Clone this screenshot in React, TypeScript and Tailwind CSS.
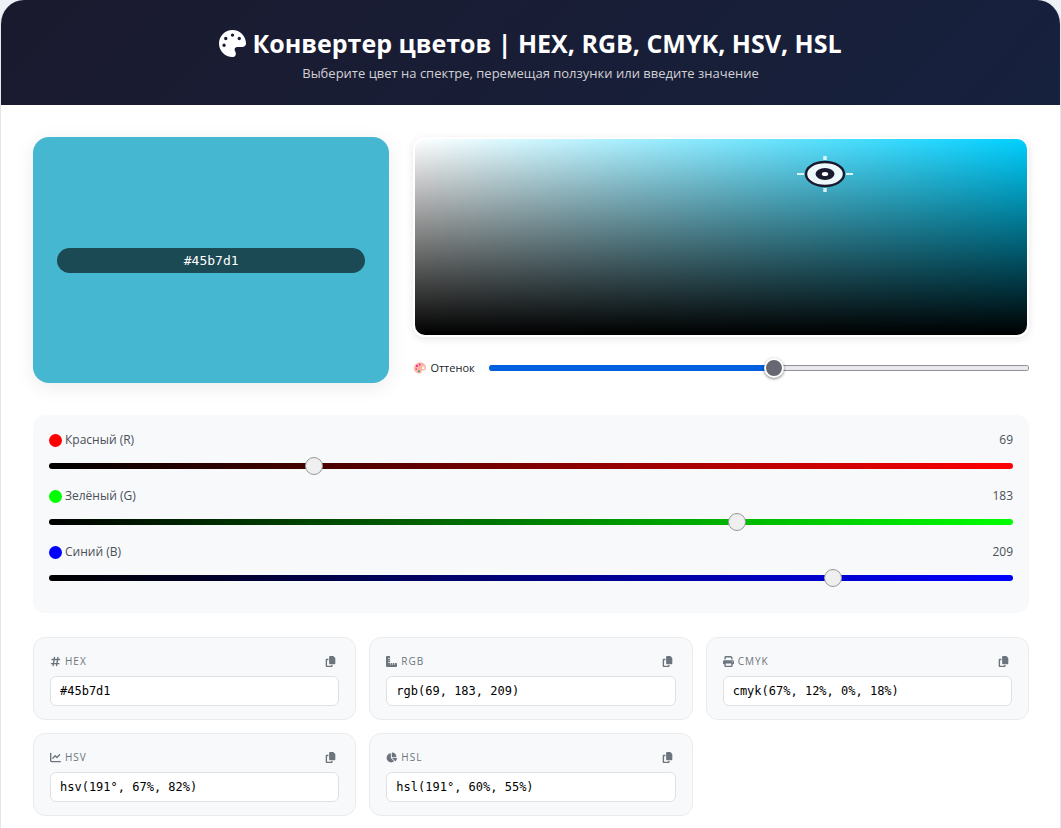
import { useId, useState } from "react";
import type { PointerEvent, ReactNode } from "react";
import {
  FaChartLine,
  FaChartPie,
  FaCopy,
  FaHashtag,
  FaPalette,
  FaPrint,
  FaRulerCombined,
} from "react-icons/fa6";

type Rgb = { r: number; g: number; b: number };

function getHue({ r, g, b }: Rgb) {
  const max = Math.max(r, g, b);
  const d = max - Math.min(r, g, b);
  if (d === 0) return 0;
  let h = (r - g) / d + 4;
  if (max === r) h = ((g - b) / d + 6) % 6;
  else if (max === g) h = (b - r) / d + 2;
  return h * 60;
}

function hsvToRgb(h: number, s: number, v: number): Rgb {
  const f = (n: number) => {
    const k = (n + h / 60) % 6;
    return Math.round(255 * (v - v * s * Math.max(0, Math.min(k, 4 - k, 1))));
  };
  return { r: f(5), g: f(3), b: f(1) };
}

const pct = (n: number) => `${Math.round(n * 100)}%`;

function ChannelSlider({
  label,
  dot,
  track,
  value,
  onChange,
}: {
  label: string;
  dot: string;
  track: string;
  value: number;
  onChange: (value: number) => void;
}) {
  const id = useId();

  return (
    <div className="mb-3">
      <div className="mb-2 flex h-[18px] items-center justify-between text-xs text-[#495057]">
        <label htmlFor={id} className="flex items-center gap-[3px]">
          <span className={`size-[13px] rounded-full ${dot}`} />
          {label}
        </label>
        <span>{value}</span>
      </div>
      <div className="flex h-[18px] items-center">
        <input
          id={id}
          type="range"
          min={0}
          max={255}
          value={value}
          onChange={(e) => onChange(Number(e.target.value))}
          className={`h-1.5 w-full cursor-pointer appearance-none rounded-full bg-linear-to-r/srgb from-black ${track} [&::-webkit-slider-thumb]:size-[18px] [&::-webkit-slider-thumb]:appearance-none [&::-webkit-slider-thumb]:rounded-full [&::-webkit-slider-thumb]:border [&::-webkit-slider-thumb]:border-[#999999] [&::-webkit-slider-thumb]:bg-[#efefef]`}
        />
      </div>
    </div>
  );
}

function FormatCard({ icon, name, value }: { icon: ReactNode; name: string; value: string }) {
  const id = useId();

  return (
    <div className="rounded-xl border border-[#e9ecef] bg-[#f8f9fb] px-4 pt-[14px] pb-[13px]">
      <div className="mb-[5px] flex h-[19px] items-center justify-between text-[#6c757d]">
        <label htmlFor={id} className="flex items-center gap-1 text-[10px] tracking-widest">
          <span className="text-[11px]">{icon}</span>
          {name}
        </label>
        <button
          type="button"
          aria-label={`Копировать ${name}`}
          onClick={() => navigator.clipboard?.writeText(value)}
          className="cursor-pointer px-[3px] text-[11px]"
        >
          <FaCopy />
        </button>
      </div>
      <input
        id={id}
        type="text"
        readOnly
        value={value}
        className="block h-[30px] w-full rounded-md border border-[#dee2e6] bg-white px-[9px] font-['DejaVu_Sans_Mono',monospace] text-xs text-black"
      />
    </div>
  );
}

function Crosshair() {
  return (
    <svg width="56" height="36" viewBox="0 0 56 36" fill="none">
      <path d="M0 18h7M49 18h7" stroke="#fff" strokeOpacity=".8" strokeWidth="2" />
      <path d="M28 0v4M28 32v4" stroke="#fff" strokeOpacity=".8" strokeWidth="3.5" />
      <ellipse cx="28" cy="18" rx="19" ry="12" fill="#fff" fillOpacity=".9" stroke="#1a1a2e" strokeWidth="2.4" />
      <ellipse cx="28" cy="18" rx="9.5" ry="6" fill="#1a1a2e" />
      <ellipse cx="28" cy="18" rx="3.2" ry="2" fill="#fff" />
    </svg>
  );
}

function PaletteEmoji() {
  return (
    <svg width="12" height="12" viewBox="0 0 24 24">
      <path
        d="M12 1C5 1 0 6 0 12.500S5 23 11 23c4 0 4-2 4-4 0-2 2-2 4-2 3 0 5-2 5-5C24 5 19 1 12 1Z"
        fill="#ffb3a2"
      />
      <ellipse cx="18.500" cy="11.500" rx="2.500" ry="3" fill="#fff" />
      <circle cx="11.500" cy="5" r="1.800" fill="#c239b3" />
      <circle cx="6" cy="8" r="1.800" fill="#e3008c" />
      <circle cx="4.500" cy="14" r="1.700" fill="#e0557f" />
      <circle cx="10" cy="18.500" r="2" fill="#2a93a8" />
    </svg>
  );
}

export default function App() {
  const [rgb, setRgb] = useState<Rgb>({ r: 69, g: 183, b: 209 });
  const { r, g, b } = rgb;

  const max = Math.max(r, g, b) / 255;
  const min = Math.min(r, g, b) / 255;
  const hue = Math.round(getHue(rgb));
  const sat = max === 0 ? 0 : (max - min) / max;
  const light = (max + min) / 2;
  const hslSat = max === min ? 0 : (max - min) / (1 - Math.abs(2 * light - 1));
  const ink = (n: number) => pct(max === 0 ? 0 : (max - n / 255) / max);

  const hex = "#" + [r, g, b].map((n) => n.toString(16).padStart(2, "0")).join("");
  const pure = hsvToRgb(hue, 1, 1);

  const pickColor = (e: PointerEvent<HTMLDivElement>) => {
    const box = e.currentTarget.getBoundingClientRect();
    const x = Math.min(1, Math.max(0, (e.clientX - box.left) / box.width));
    const y = Math.min(1, Math.max(0, (e.clientY - box.top) / box.height));
    setRgb(hsvToRgb(hue, x, 1 - y));
  };

  return (
    <div className="min-h-screen bg-[#eef1f6] font-['Open_Sans','Noto_Sans',sans-serif]">
      <div className="min-h-screen overflow-hidden rounded-t-3xl border-x border-[#e4e6ea] bg-white">
        <header className="bg-linear-135 from-[#1a1a2e] to-[#16213e] px-8 pt-6 pb-[21px] text-center">
          <h1 className="flex items-center justify-center gap-1.5 text-[25px] leading-[38px] font-bold text-white">
            <FaPalette className="size-[27px]" />
            Конвертер цветов | HEX, RGB, CMYK, HSV, HSL
          </h1>
          <p className="mt-px text-[13px] leading-[21px] text-[#d1d1d5]">
            Выберите цвет на спектре, перемещая ползунки или введите значение
          </p>
        </header>

        <main className="pt-8 pr-[31px] pb-3 pl-8">
          <section className="grid grid-cols-[11fr_19fr] gap-6">
            <div
              className="flex items-center rounded-2xl px-6 shadow-[0_4px_20px_rgba(0,0,0,0.08)]"
              style={{ backgroundColor: hex }}
            >
              <div className="w-full rounded-full bg-black/60 text-center font-['DejaVu_Sans_Mono',monospace] text-[13px] leading-[25px] text-white">
                {hex}
              </div>
            </div>

            <div>
              <div className="rounded-xl border-2 border-white shadow-[0_2px_8px_rgba(0,0,0,0.1)]">
                <div
                  onPointerDown={pickColor}
                  className="relative h-[196px] cursor-crosshair rounded-[10px]"
                  style={{
                    backgroundImage: `linear-gradient(to top, #000, transparent), linear-gradient(to right, #fff, rgb(${pure.r}, ${pure.g}, ${pure.b}))`,
                  }}
                >
                  <div
                    className="pointer-events-none absolute -translate-x-1/2 -translate-y-1/2"
                    style={{ left: `${sat * 100}%`, top: `${(1 - max) * 100}%` }}
                  >
                    <Crosshair />
                  </div>
                </div>
              </div>
              <div className="mt-4 flex h-[30px] items-center gap-[14px]">
                <label
                  htmlFor="hue"
                  className="flex items-center gap-1 pl-px text-[11px] text-[#212529]"
                >
                  <PaletteEmoji />
                  Оттенок
                </label>
                <input
                  id="hue"
                  type="range"
                  min={0}
                  max={360}
                  value={hue}
                  onChange={(e) => setRgb(hsvToRgb(Number(e.target.value), sat, max))}
                  className="h-1.5 min-w-0 flex-1 cursor-pointer appearance-none rounded-full border-r border-[#8f8f9d] [&::-webkit-slider-thumb]:size-5 [&::-webkit-slider-thumb]:appearance-none [&::-webkit-slider-thumb]:rounded-full [&::-webkit-slider-thumb]:border-2 [&::-webkit-slider-thumb]:border-white [&::-webkit-slider-thumb]:bg-[#676774] [&::-webkit-slider-thumb]:shadow-[0_1px_3px_rgba(0,0,0,0.5)]"
                  style={{
                    backgroundImage: `linear-gradient(to right, #0060df ${hue / 3.6}%, transparent ${hue / 3.6}%), linear-gradient(#8f8f9d 1px, #e9e9ed 1px 5px, #8f8f9d 5px)`,
                  }}
                />
              </div>
            </div>
          </section>

          <section className="mt-8 rounded-xl bg-[#f8f9fb] px-4 pt-4 pb-[14px]">
            <ChannelSlider
              label="Красный (R)"
              dot="bg-[#ff0000]"
              track="to-[#ff0000]"
              value={r}
              onChange={(value) => setRgb({ ...rgb, r: value })}
            />
            <ChannelSlider
              label="Зелёный (G)"
              dot="bg-[#00ff00]"
              track="to-[#00ff00]"
              value={g}
              onChange={(value) => setRgb({ ...rgb, g: value })}
            />
            <ChannelSlider
              label="Синий (B)"
              dot="bg-[#0000ff]"
              track="to-[#0000ff]"
              value={b}
              onChange={(value) => setRgb({ ...rgb, b: value })}
            />
          </section>

          <section className="mt-6 grid grid-cols-3 gap-[13px]">
            <FormatCard icon={<FaHashtag />} name="HEX" value={hex} />
            <FormatCard icon={<FaRulerCombined />} name="RGB" value={`rgb(${r}, ${g}, ${b})`} />
            <FormatCard
              icon={<FaPrint />}
              name="CMYK"
              value={`cmyk(${ink(r)}, ${ink(g)}, ${ink(b)}, ${pct(1 - max)})`}
            />
            <FormatCard icon={<FaChartLine />} name="HSV" value={`hsv(${hue}°, ${pct(sat)}, ${pct(max)})`} />
            <FormatCard icon={<FaChartPie />} name="HSL" value={`hsl(${hue}°, ${pct(hslSat)}, ${pct(light)})`} />
          </section>
        </main>
      </div>
    </div>
  );
}
